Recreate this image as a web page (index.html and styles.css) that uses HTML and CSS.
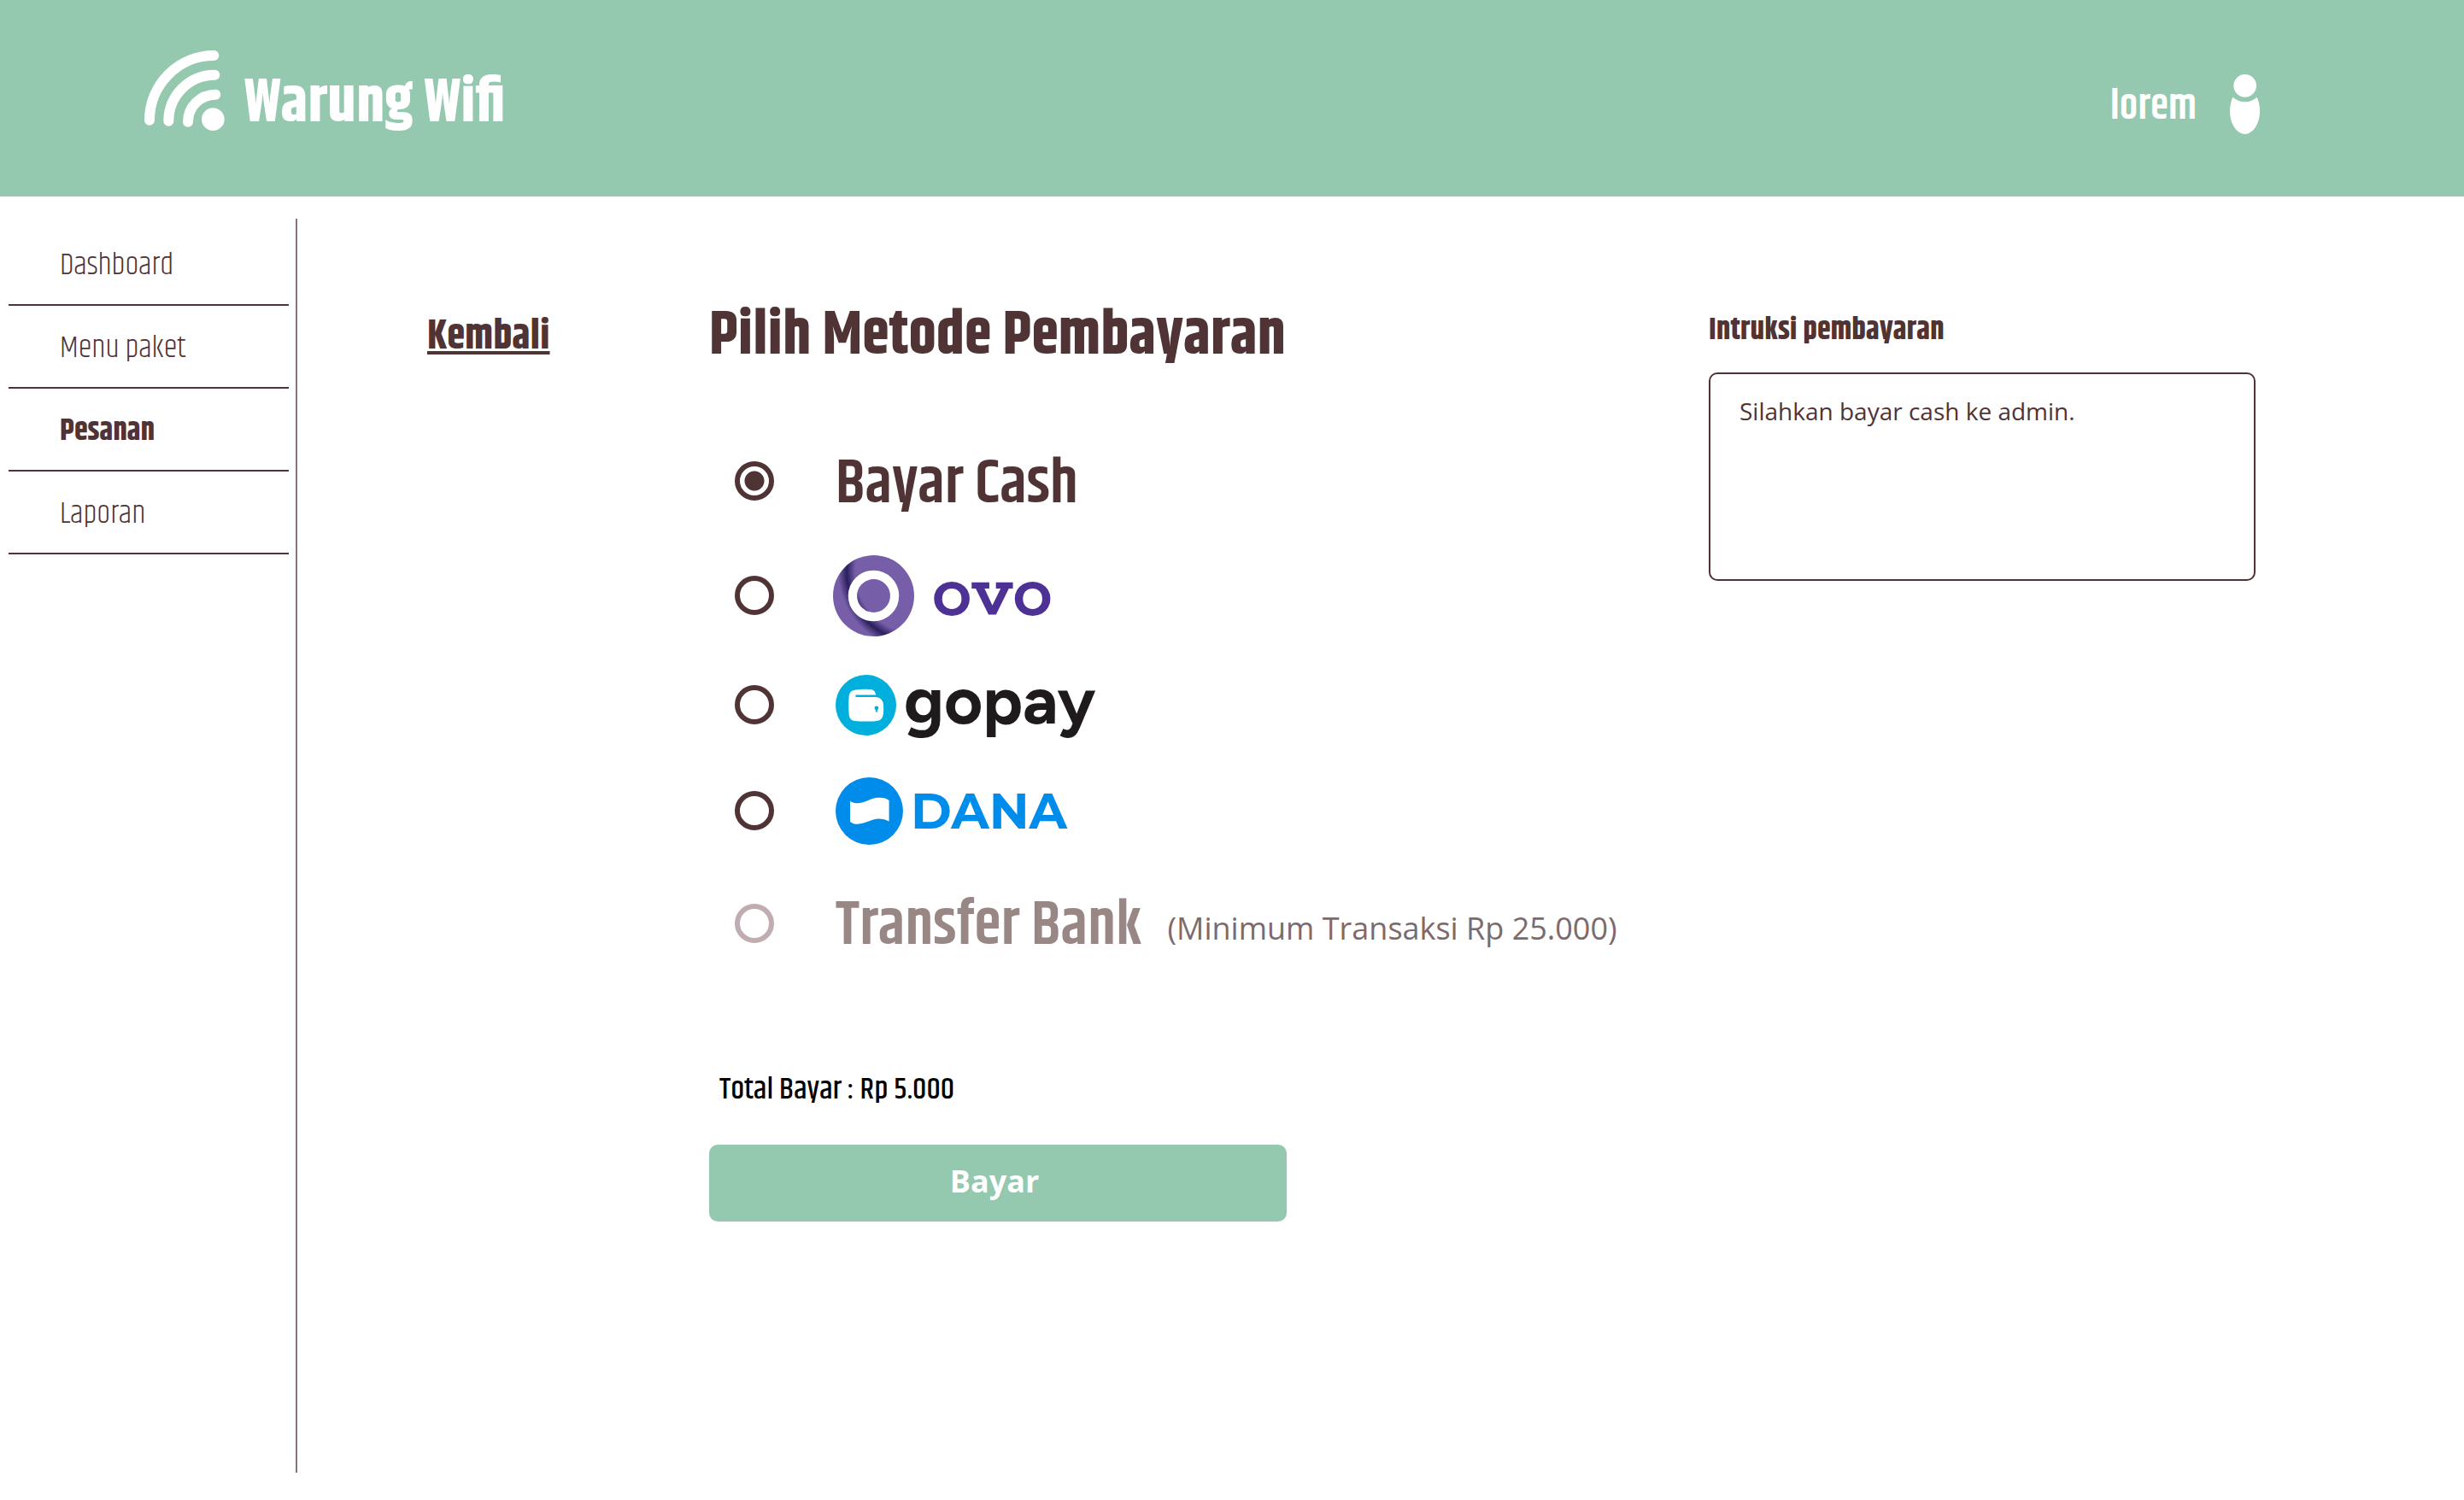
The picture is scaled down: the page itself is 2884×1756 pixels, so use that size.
FILE: index.html
```html
<!DOCTYPE html>
<html lang="id">
<head>
<meta charset="utf-8">
<meta name="viewport" content="width=device-width, initial-scale=1">
<title>Warung Wifi - Pilih Metode Pembayaran</title>
<link rel="stylesheet" href="styles.css">
</head>
<body>
<header class="topbar">
  <div class="brand">
    <svg class="brand-icon" viewBox="0 0 282 282" aria-hidden="true">
      <g fill="none" stroke="#fff" stroke-width="36" stroke-linecap="round">
        <path d="M244 18A226 227 0 0 0 18 245"/>
        <path d="M247 86A162 162 0 0 0 85 248"/>
        <path d="M250 155A97 96 0 0 0 153 251"/>
      </g>
      <circle cx="241" cy="242" r="40" fill="#fff"/>
    </svg>
    <span class="brand-name">Warung Wifi</span>
  </div>
  <div class="user">
    <span class="user-name">lorem</span>
    <svg class="user-icon" viewBox="0 0 105 210" aria-hidden="true">
      <circle cx="53" cy="40" r="40" fill="#fff"/>
      <path fill="#fff" d="M10 80Q30 97 53 97Q76 97 95 80C102 95 105 112 105 130C105 175 80 210 53 210C25 210 0 175 0 130C0 112 4 93 10 80Z"/>
    </svg>
  </div>
</header>

<div class="page">
  <nav class="sidebar">
    <ul class="menu">
      <li><a href="#dashboard">Dashboard</a></li>
      <li><a href="#paket">Menu paket</a></li>
      <li><a class="active" href="#pesanan">Pesanan</a></li>
      <li><a href="#laporan">Laporan</a></li>
    </ul>
  </nav>

  <main class="content">
    <div class="back"><a href="#pesanan">Kembali</a></div>

    <form class="payment">
      <h1>Pilih Metode Pembayaran</h1>

      <div class="options">
        <label class="option">
          <input type="radio" name="metode" value="cash" checked>
          <span class="option-name">Bayar Cash</span>
        </label>

        <label class="option option-ovo">
          <input type="radio" name="metode" value="ovo">
          <svg class="logo" viewBox="0 0 286 286" aria-hidden="true">
            <defs>
              <radialGradient id="ovo-shade" gradientUnits="userSpaceOnUse" cx="300" cy="55" r="300">
                <stop offset=".74" stop-color="#765ea8"/>
                <stop offset=".84" stop-color="#2a1f5c"/>
                <stop offset=".94" stop-color="#765ea8"/>
              </radialGradient>
            </defs>
            <circle cx="143" cy="143" r="143" fill="url(#ovo-shade)"/>
            <circle cx="143" cy="143" r="74" fill="none" stroke="#fff" stroke-width="31"/>
          </svg>
          <span class="wordmark">ovo</span>
        </label>

        <label class="option option-gopay">
          <input type="radio" name="metode" value="gopay">
          <svg class="logo" viewBox="0 0 212 212" aria-hidden="true">
            <circle cx="106" cy="106" r="106" fill="#00afdb"/>
            <path fill="#fff" d="M66 53Q95 49 124 51Q138 54 141 70H70V78H140Q166 80 167 106Q169 125 166 140Q163 158 145 161Q105 165 66 161Q49 158 47 140Q44 105 47 72Q50 56 66 53Z"/>
            <circle cx="143" cy="116" r="7" fill="#00afdb"/>
            <path d="M143 116V128" stroke="#00afdb" stroke-width="6" stroke-linecap="round"/>
          </svg>
          <span class="wordmark">gopay</span>
        </label>

        <label class="option option-dana">
          <input type="radio" name="metode" value="dana">
          <svg class="logo" viewBox="0 0 236 236" aria-hidden="true">
            <circle cx="118" cy="118" r="118" fill="#008ceb"/>
            <path fill="#fff" d="M51 83C85 105 115 72 150 71Q175 70 187 81V154Q170 144 150 145C120 146 80 178 51 155Z"/>
          </svg>
          <span class="wordmark">DANA</span>
        </label>

        <label class="option option-bank">
          <input type="radio" name="metode" value="bank" disabled>
          <span class="option-name">Transfer Bank</span>
          <span class="option-note">(Minimum Transaksi Rp 25.000)</span>
        </label>
      </div>

      <p class="total">Total Bayar : Rp 5.000</p>
      <button class="pay" type="submit">Bayar</button>
    </form>

    <aside class="instructions">
      <h2>Intruksi pembayaran</h2>
      <p class="instruction-box">Silahkan bayar cash ke admin.</p>
    </aside>
  </main>
</div>
</body>
</html>
```
FILE: styles.css
```css
:root {
  --green: #94c8af;
  --brown: #503335;
  --heading: Khand, "Open Sans Condensed", "Roboto Condensed", sans-serif;
  --body: "Open Sans", "Noto Sans", sans-serif;
}

* {
  box-sizing: border-box;
}

body {
  margin: 0;
  min-height: 100vh;
  display: flex;
  flex-direction: column;
  background: #fff;
  color: var(--brown);
  font-family: var(--heading);
}

a {
  color: inherit;
}

h1,
h2,
p,
ul {
  margin: 0;
  padding: 0;
}

/* Top bar */

.topbar {
  display: flex;
  justify-content: space-between;
  align-items: flex-start;
  min-height: 230px;
  padding: 59px 239px 0 169px;
  background: var(--green);
  color: #fff;
}

.brand {
  display: flex;
  align-items: flex-start;
  gap: 23px;
}

.brand-icon {
  width: 94px;
  height: 94px;
}

.brand-name {
  padding-top: 26px;
  font-size: 72px;
  font-weight: 700;
  line-height: 72px;
}

.user {
  display: flex;
  align-items: flex-start;
  gap: 39px;
  padding-top: 28px;
  font-size: 48px;
  font-weight: 600;
  line-height: 70px;
}

.user-name {
  padding-top: 4px;
}

.user-icon {
  width: 35px;
  height: 70px;
}

/* Sidebar */

.page {
  flex: 1;
  display: flex;
}

.sidebar {
  flex: 0 0 348px;
  margin: 26px 0 32px;
  padding: 5px 8px 0 10px;
  border-right: 2px solid #8a7374;
}

.menu {
  list-style: none;
}

.menu li {
  border-bottom: 2px solid var(--brown);
}

.menu a {
  display: block;
  padding: 6px 0 1px 60px;
  font-size: 36px;
  font-weight: 300;
  line-height: 88px;
  text-decoration: none;
}

.menu .active {
  font-weight: 700;
}

/* Content */

.content {
  flex: 1;
  display: grid;
  grid-template-columns: 330px minmax(0, 1fr) 640px;
  align-items: start;
  padding: 127px 244px 64px 152px;
}

.back {
  font-size: 48px;
  font-weight: 700;
  line-height: 76px;
}

h1 {
  font-size: 72px;
  font-weight: 700;
  line-height: 72px;
}

.options {
  display: flex;
  flex-direction: column;
  align-items: flex-start;
  gap: 44px;
  margin-top: 92px;
  padding-left: 30px;
}

.option {
  display: flex;
  align-items: center;
  min-height: 84px;
}

.option input {
  appearance: none;
  flex: none;
  width: 46px;
  height: 46px;
  margin: 0 69px 0 0;
  border: 6px solid var(--brown);
  border-radius: 50%;
}

.option input:checked {
  background: radial-gradient(circle, var(--brown) 11px, transparent 12px);
}

.option input:disabled {
  border-color: #c1adaf;
}

.option-name {
  padding: 8px 0 0 3px;
  font-size: 72px;
  font-weight: 600;
  line-height: 72px;
}

.option-ovo {
  min-height: 96px;
}

.option-ovo .logo {
  width: 95px;
  height: 95px;
}

.option-ovo .wordmark {
  padding-left: 20px;
  color: #4d3195;
  font: 600 96px/80px Rokkitt, "Liberation Mono", monospace;
}

.option-gopay {
  min-height: 72px;
}

.option-gopay .logo {
  width: 71px;
  height: 71px;
  margin-left: 3px;
}

.option-gopay .wordmark {
  padding: 0 0 10px 9px;
  color: #1f1a1b;
  font: 700 78px/60px Figtree, Inter, sans-serif;
}

.option-dana {
  min-height: 88px;
}

.option-dana .logo {
  width: 79px;
  height: 79px;
  margin-left: 3px;
}

.option-dana .wordmark {
  padding: 2px 0 0 9px;
  color: #008ceb;
  font: 700 58px/80px Montserrat, "DejaVu Sans", sans-serif;
}

.option-bank {
  min-height: 88px;
  color: #998785;
}

.option-bank .option-name {
  padding-top: 6px;
}

.option-note {
  padding: 12px 0 0 30px;
  color: #7b6b6c;
  font: 400 36px/72px var(--body);
}

.total {
  margin-top: 127px;
  padding-left: 12px;
  color: #000;
  font-size: 36px;
  font-weight: 500;
  line-height: 48px;
}

.pay {
  display: block;
  width: 100%;
  max-width: 676px;
  height: 90px;
  margin-top: 40px;
  padding: 0 8px 4px 0;
  border: 0;
  border-radius: 10px;
  background: var(--green);
  color: #fff;
  font: 700 36px/48px var(--body);
}

/* Instructions */

.instructions {
  padding-top: 2px;
}

h2 {
  font-size: 36px;
  font-weight: 700;
  line-height: 56px;
}

.instruction-box {
  min-height: 244px;
  margin-top: 21px;
  padding: 23px 34px;
  border: 2px solid var(--brown);
  border-radius: 10px;
  font: 400 28px/40px var(--body);
}
```
